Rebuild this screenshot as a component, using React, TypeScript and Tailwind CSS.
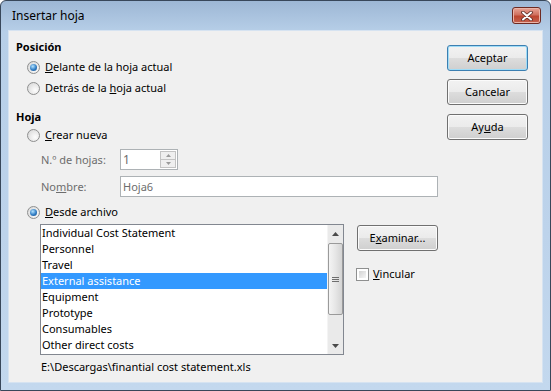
import clsx from "clsx";

const font = "font-['Noto_Sans',sans-serif] text-[11px] leading-[16px]";

const Radio = ({ checked }: { checked?: boolean }) => (
    <span className="flex items-center justify-center w-[13px] h-[13px] shrink-0 rounded-full border border-[#8e8f8f] bg-[radial-gradient(circle_at_65%_65%,#fdfdfd,#d4d4d4)]">
        {checked && (
            <span className="w-[7px] h-[7px] rounded-full bg-[radial-gradient(circle_at_40%_35%,#b5e4ff,#2f7cc4_55%,#19497e)]" />
        )}
    </span>
);

const Check = () => (
    <span className="w-[13px] h-[13px] shrink-0 border border-[#8e8f8f] bg-white p-[2px]">
        <span className="block w-full h-full bg-[linear-gradient(135deg,#d3d3d3,#f6f6f6)]" />
    </span>
);

interface BtnParameters {
    children: React.ReactNode;
    primary?: boolean;
    className?: string;
}

const Btn = ({ children, primary, className }: BtnParameters) => (
    <div
        className={clsx(
            "h-[26px] rounded-[3px] border flex items-center justify-center text-black",
            "bg-[linear-gradient(#f2f2f2,#ebebeb_50%,#dddddd_50%,#cfcfcf)]",
            primary
                ? "border-[#3c7fb1] shadow-[inset_0_0_0_1px_#9fdcf7]"
                : "border-[#707070] shadow-[inset_0_0_0_1px_#fbfbfb]",
            className
        )}>
        {children}
    </div>
);

const Triangle = ({ up }: { up?: boolean }) => (
    <svg width="7" height="4" viewBox="0 0 7 4">
        <path d={up ? "M0 4 L3.5 0 L7 4 Z" : "M0 0 L3.5 4 L7 0 Z"} fill="#4a4a4a" />
    </svg>
);

const items = [
    "Individual Cost Statement",
    "Personnel",
    "Travel",
    "External assistance",
    "Equipment",
    "Prototype",
    "Consumables",
    "Other direct costs",
];

const RadioRow = ({ checked, children, className }: { checked?: boolean; children: React.ReactNode; className?: string }) => (
    <div className={clsx("flex items-center h-[16px] pl-[11px]", className)}>
        <Radio checked={checked} />
        <span className="ml-[5px]">{children}</span>
    </div>
);

export default function App() {
    return (
        <div className={clsx("w-[551px] h-[391px] flex flex-col rounded-t-[6px] border border-[#38475a] bg-[linear-gradient(#9db7d5,#b7cfe8_8%,#bdd3eb_60%,#c3d8ee)] text-black", font)}>
            {/* title bar */}
            <div className="h-[29px] flex items-center pl-[11px] pr-[9px] shrink-0">
                <span className="text-[12px] text-black mt-[1px]">Insertar hoja</span>
                <div className="ml-auto w-[29px] h-[17px] rounded-[3px] border border-[#6e2a22] bg-[linear-gradient(#e8a597,#d0705f_45%,#bd4630_55%,#c4624f)] flex items-center justify-center shadow-[inset_0_0_0_1px_#eab4a8]">
                    <svg width="12" height="10" viewBox="0 0 12 10">
                        <path d="M2 1.5 L10 8.5 M10 1.5 L2 8.5" stroke="#5a2a24" strokeWidth="3.6" strokeLinecap="round" />
                        <path d="M2 1.5 L10 8.5 M10 1.5 L2 8.5" stroke="#ffffff" strokeWidth="2" strokeLinecap="round" />
                    </svg>
                </div>
            </div>

            {/* client area */}
            <div className="flex flex-row mx-[7px] h-[353px] bg-[#f0f0f0] border border-[#d6e3f1]">
                <div className="w-[438px] flex flex-col pt-[8px] pl-[7px]">
                    <div className="font-bold h-[16px]">Posición</div>
                    <RadioRow checked className="mt-[4px]">
                        <u>D</u>elante de la hoja actual
                    </RadioRow>
                    <RadioRow className="mt-[5px]">
                        Detrás de la <u>h</u>oja actual
                    </RadioRow>
                    <div className="font-bold h-[16px] mt-[13px]">Hoja</div>
                    <RadioRow className="mt-[2px]">
                        <u>C</u>rear nueva
                    </RadioRow>

                    <div className="flex items-center mt-[6px] text-[#6d6d6d]">
                        <span className="w-[104px] pl-[25px] shrink-0 whitespace-nowrap">
                            N.º de ho<u>j</u>as:
                        </span>
                        <div className="w-[58px] h-[21px] border border-[#adb2b5] bg-white flex items-center pl-[2px] pr-[1px]">
                            <span className="flex-1 text-[#6d6d6d] text-[12px]">1</span>
                            <div className="w-[16px] h-[17px] flex flex-col">
                                <div className="flex-1 border border-[#c3c3c3] bg-[#efefef] flex items-center justify-center">
                                    <svg width="5" height="3" viewBox="0 0 5 3"><path d="M0 3 L2.5 0 L5 3 Z" fill="#9a9a9a" /></svg>
                                </div>
                                <div className="flex-1 border border-t-0 border-[#c3c3c3] bg-[#efefef] flex items-center justify-center">
                                    <svg width="5" height="3" viewBox="0 0 5 3"><path d="M0 0 L2.5 3 L5 0 Z" fill="#9a9a9a" /></svg>
                                </div>
                            </div>
                        </div>
                    </div>

                    <div className="flex items-center mt-[6px] text-[#6d6d6d]">
                        <span className="w-[104px] pl-[25px] shrink-0 whitespace-nowrap">
                            No<u>m</u>bre:
                        </span>
                        <div className="w-[318px] h-[21px] border border-[#adb2b5] bg-white flex items-center pl-[2px]">
                            Hoja6
                        </div>
                    </div>

                    <RadioRow checked className="mt-[7px]">
                        <u>D</u>esde archivo
                    </RadioRow>

                    <div className="flex flex-row mt-[4px] pl-[24px]">
                        <div className="w-[304px] h-[131px] border border-[#828790] bg-white flex flex-row">
                            <div className="flex-1 flex flex-col">
                                {items.map((item, i) => (
                                    <div
                                        key={item}
                                        className={clsx(
                                            "h-[16px] pl-[1px] whitespace-nowrap",
                                            i === 3 ? "bg-[#3399ff] text-white" : "text-black"
                                        )}>
                                        {item}
                                    </div>
                                ))}
                            </div>
                            <div className="w-[16px] flex flex-col bg-[#eaeaea] border-l border-[#f4f4f4]">
                                <div className="h-[17px] flex items-center justify-center">
                                    <Triangle up />
                                </div>
                                <div className="mt-[1px] h-[72px] rounded-[2px] border border-[#9a9a9a] bg-[linear-gradient(90deg,#f4f4f4,#e6e6e6_50%,#d4d4d4)] flex flex-col items-center justify-center gap-[1px]">
                                    <span className="w-[7px] h-[1px] bg-[#6e6e6e]" />
                                    <span className="w-[7px] h-[1px] bg-[#6e6e6e]" />
                                    <span className="w-[7px] h-[1px] bg-[#6e6e6e]" />
                                </div>
                                <div className="mt-auto h-[17px] flex items-center justify-center">
                                    <Triangle />
                                </div>
                            </div>
                        </div>

                        <div className="flex flex-col ml-[13px] pt-[1px]">
                            <Btn className="w-[81px]">
                                E<u>x</u>aminar...
                            </Btn>
                            <div className="flex items-center mt-[15px] h-[16px] -ml-[1px]">
                                <Check />
                                <span className="ml-[4px]">
                                    <u>V</u>incular
                                </span>
                            </div>
                        </div>
                    </div>

                    <div className="mt-[4px] pl-[25px] h-[16px]">E:\Descargas\finantial cost statement.xls</div>
                </div>

                <div className="flex flex-col pt-[14px] w-[81px]">
                    <Btn primary>Aceptar</Btn>
                    <Btn className="mt-[8px]">Cancelar</Btn>
                    <Btn className="mt-[9px]">
                        Ay<u>u</u>da
                    </Btn>
                </div>
            </div>
        </div>
    );
}
